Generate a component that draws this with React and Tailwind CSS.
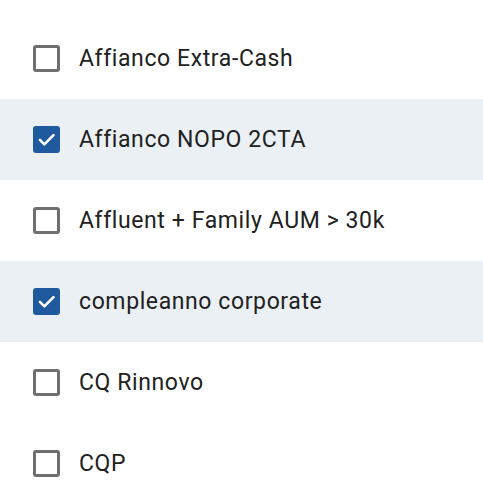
import React from "react";

const items = [
  { label: "Affianco Extra-Cash", checked: false },
  { label: "Affianco NOPO 2CTA", checked: true },
  { label: "Affluent + Family AUM > 30k", checked: false },
  { label: "compleanno corporate", checked: true },
  { label: "CQ Rinnovo", checked: false },
  { label: "CQP", checked: false },
];

function Box({ checked }) {
  if (checked) {
    return (
      <div className="w-[27px] h-[27px] rounded-[3px] bg-[#1f5a9e] flex items-center justify-center shrink-0">
        <svg width="21" height="21" viewBox="0 0 24 24" fill="none">
          <path d="M4.5 12.5l5 5L20 7" stroke="white" strokeWidth="3" strokeLinecap="round" strokeLinejoin="round" />
        </svg>
      </div>
    );
  }
  return <div className="w-[27px] h-[27px] rounded-[3px] border-[3px] border-[#6f6f6f] bg-white shrink-0" />;
}

export default function App() {
  return (
    <div className="w-[483px] h-[490px] overflow-hidden bg-white pt-[18px]" style={{ fontFamily: "Roboto, 'Noto Sans', sans-serif" }}>
      {items.map((it, i) => (
        <div key={i} className={`h-[81px] flex items-center pl-[33px] gap-[19px] ${it.checked ? "bg-[#ebf0f5]" : ""}`}>
          <Box checked={it.checked} />
          <span className="text-[23px] leading-none text-[#212121] tracking-[0.6px]">{it.label}</span>
        </div>
      ))}
    </div>
  );
}
